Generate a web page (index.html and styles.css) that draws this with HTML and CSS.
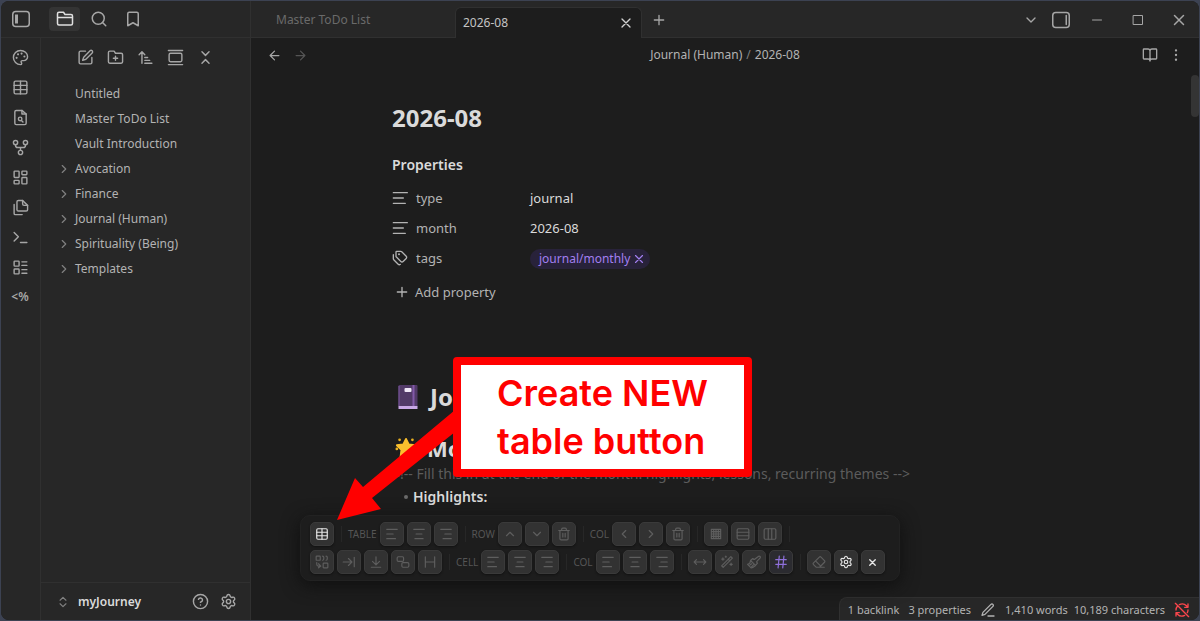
FILE: index.html
```html
<!DOCTYPE html>
<html lang="en">
<head>
<meta charset="utf-8">
<title>2026-08 - myJourney</title>
<link rel="stylesheet" href="styles.css">
</head>
<body>
<svg class="sprite" aria-hidden="true">
  <symbol id="palette" viewBox="0 0 24 24"><path d="M12 2a10 10 0 0 0 0 20c1 0 1.700-.8 1.700-1.700 0-.4-.2-.8-.4-1.100-.3-.3-.5-.7-.5-1.200a1.600 1.600 0 0 1 1.700-1.600h2A5.500 5.500 0 0 0 22 10.900C22 6 17.500 2 12 2z"/><path d="M13.500 6.500h.01M17.500 10.500h.01M8.500 7.500h.01M6.500 12.500h.01" stroke-width="3"/></symbol>
  <symbol id="table" viewBox="0 0 24 24"><rect x="3" y="3" width="18" height="18" rx="2"/><path d="M12 3v18M3 9h18M3 15h18"/></symbol>
  <symbol id="file-search" viewBox="0 0 24 24"><path d="M14 2H6a2 2 0 0 0-2 2v16a2 2 0 0 0 2 2h12a2 2 0 0 0 2-2V7z"/><path d="M14 2v5h6"/><circle cx="11.500" cy="14" r="2.500"/><path d="m13.300 16.200 2.200 2.300"/></symbol>
  <symbol id="fork" viewBox="0 0 24 24"><circle cx="12" cy="19" r="3"/><circle cx="5" cy="5" r="3"/><circle cx="19" cy="5" r="3"/><path d="M19 8v1a3 3 0 0 1-3 3H8a3 3 0 0 1-3-3V8M12 12v4"/></symbol>
  <symbol id="dashboard" viewBox="0 0 24 24"><rect x="3" y="3" width="7" height="9" rx="1"/><rect x="14" y="3" width="7" height="5" rx="1"/><rect x="14" y="12" width="7" height="9" rx="1"/><rect x="3" y="16" width="7" height="5" rx="1"/></symbol>
  <symbol id="files" viewBox="0 0 24 24"><path d="M15 2H9a2 2 0 0 0-2 2v11a2 2 0 0 0 2 2h11a2 2 0 0 0 2-2V9z"/><path d="M15 2v5a2 2 0 0 0 2 2h5M3 7.600v12.800A1.600 1.600 0 0 0 4.600 22h9.800"/></symbol>
  <symbol id="terminal" viewBox="0 0 24 24"><path d="m3 17 6-6-6-6M12 19h9"/></symbol>
  <symbol id="layout-list" viewBox="0 0 24 24"><rect x="3" y="3" width="7" height="7" rx="1"/><rect x="3" y="14" width="7" height="7" rx="1"/><path d="M14 4h7M14 9h7M14 15h7M14 20h7"/></symbol>
  <symbol id="folder" viewBox="0 0 24 24"><path d="M20 20a2 2 0 0 0 2-2V8a2 2 0 0 0-2-2h-8l-2-3H4a2 2 0 0 0-2 2v13a2 2 0 0 0 2 2zM2 10h20"/></symbol>
  <symbol id="search" viewBox="0 0 24 24"><circle cx="11" cy="11" r="8"/><path d="m21 21-4.300-4.300"/></symbol>
  <symbol id="bookmark" viewBox="0 0 24 24"><path d="m19 21-7-4-7 4V5a2 2 0 0 1 2-2h10a2 2 0 0 1 2 2z"/></symbol>
  <symbol id="edit" viewBox="0 0 24 24"><path d="M12 3H5a2 2 0 0 0-2 2v14a2 2 0 0 0 2 2h14a2 2 0 0 0 2-2v-7"/><path d="M18.400 2.600a2.100 2.100 0 0 1 3 3L12.500 14.500 8 16l1.500-4.500z"/></symbol>
  <symbol id="folder-plus" viewBox="0 0 24 24"><path d="M20 20a2 2 0 0 0 2-2V8a2 2 0 0 0-2-2h-8l-2-3H4a2 2 0 0 0-2 2v13a2 2 0 0 0 2 2zM12 10v6M9 13h6"/></symbol>
  <symbol id="sort" viewBox="0 0 24 24"><path d="m3 8 4-4 4 4M7 4v16M11 12h4M11 16h7M11 20h10"/></symbol>
  <symbol id="gallery" viewBox="0 0 24 24"><path d="M2 2h20M2 22h20"/><rect x="3" y="6" width="18" height="12" rx="2"/></symbol>
  <symbol id="collapse" viewBox="0 0 24 24"><path d="m7 20 5-5 5 5M7 4l5 5 5-5"/></symbol>
  <symbol id="right" viewBox="0 0 24 24"><path d="m9 18 6-6-6-6"/></symbol>
  <symbol id="left" viewBox="0 0 24 24"><path d="m15 18-6-6 6-6"/></symbol>
  <symbol id="down" viewBox="0 0 24 24"><path d="m6 9 6 6 6-6"/></symbol>
  <symbol id="up" viewBox="0 0 24 24"><path d="m6 15 6-6 6 6"/></symbol>
  <symbol id="updown" viewBox="0 0 24 24"><path d="m7 15 5 5 5-5M7 9l5-5 5 5"/></symbol>
  <symbol id="help" viewBox="0 0 24 24"><circle cx="12" cy="12" r="10"/><path d="M9.100 9a3 3 0 0 1 5.800 1c0 2-3 3-3 3M12 17h.01"/></symbol>
  <symbol id="gear" viewBox="0 0 24 24"><path d="M9.700 4.100a2.340 2.340 0 0 1 4.600 0 2.340 2.340 0 0 0 3.400 1.900 2.340 2.340 0 0 1 2.300 4 2.340 2.340 0 0 0 0 4 2.340 2.340 0 0 1-2.300 4 2.340 2.340 0 0 0-3.400 1.900 2.340 2.340 0 0 1-4.600 0A2.340 2.340 0 0 0 6.300 18 2.340 2.340 0 0 1 4 14a2.340 2.340 0 0 0 0-4 2.340 2.340 0 0 1 2.300-4 2.340 2.340 0 0 0 3.400-1.900z"/><circle cx="12" cy="12" r="3"/></symbol>
  <symbol id="arrow-left" viewBox="0 0 24 24"><path d="m12 19-7-7 7-7M19 12H5"/></symbol>
  <symbol id="arrow-right" viewBox="0 0 24 24"><path d="m12 5 7 7-7 7M5 12h14"/></symbol>
  <symbol id="x" viewBox="0 0 24 24"><path d="M18 6 6 18M6 6l12 12"/></symbol>
  <symbol id="plus" viewBox="0 0 24 24"><path d="M5 12h14M12 5v14"/></symbol>
  <symbol id="minus" viewBox="0 0 24 24"><path d="M3 12h18"/></symbol>
  <symbol id="square" viewBox="0 0 24 24"><path d="M3 3h18v18H3z"/></symbol>
  <symbol id="book" viewBox="0 0 24 24"><path d="M12 5v16M3 18a1 1 0 0 1-1-1V4a1 1 0 0 1 1-1h6a3 3 0 0 1 3 3 3 3 0 0 1 3-3h6a1 1 0 0 1 1 1v13a1 1 0 0 1-1 1h-6a3 3 0 0 0-3 3 3 3 0 0 0-3-3z"/></symbol>
  <symbol id="dots" viewBox="0 0 24 24"><path d="M12 4h.01M12 12h.01M12 20h.01" stroke-width="4"/></symbol>
  <symbol id="text" viewBox="0 0 24 24"><path d="M2 4h21M2 12h15M2 20h18"/></symbol>
  <symbol id="tags" viewBox="0 0 24 24"><path d="M13.200 2H7a1 1 0 0 0-1 1v6.200a2 2 0 0 0 .6 1.400l6.700 6.700a2.400 2.400 0 0 0 3.400 0l4.600-4.600a2.400 2.400 0 0 0 0-3.400l-6.700-6.700a2 2 0 0 0-1.400-.6zM2 7v6.200a2 2 0 0 0 .6 1.400l6.700 6.700a2.400 2.400 0 0 0 3.200.2"/><path d="M10.500 6.500h.01" stroke-width="3"/></symbol>
  <symbol id="align-left" viewBox="0 0 24 24"><path d="M3 4h18M3 12h11M3 20h15"/></symbol>
  <symbol id="align-center" viewBox="0 0 24 24"><path d="M3 4h18M7 12h10M5 20h14"/></symbol>
  <symbol id="align-right" viewBox="0 0 24 24"><path d="M3 4h18M10 12h11M7 20h14"/></symbol>
  <symbol id="trash" viewBox="0 0 24 24"><path d="M3 6h18M19 6v14a2 2 0 0 1-2 2H7a2 2 0 0 1-2-2V6M8 6V4a2 2 0 0 1 2-2h4a2 2 0 0 1 2 2v2M10 11v6M14 11v6"/></symbol>
  <symbol id="grid" viewBox="0 0 24 24"><path d="M4 4h16v16H4zM4 8h16M4 12h16M4 16h16M8 4v16M12 4v16M16 4v16"/></symbol>
  <symbol id="rows" viewBox="0 0 24 24"><rect x="2" y="3" width="20" height="18" rx="2"/><path d="M2 9h20M2 15h20"/></symbol>
  <symbol id="columns" viewBox="0 0 24 24"><rect x="2" y="3" width="20" height="18" rx="2"/><path d="M9 3v18M15 3v18"/></symbol>
  <symbol id="replace" viewBox="0 0 24 24"><rect x="2" y="2" width="7" height="7" rx="1"/><rect x="14" y="14" width="8" height="8" rx="1"/><path d="M13 2q2 0 2 2v3q0 2-2 2M19 2q2 0 2 2v3q0 2-2 2M3 13v3q0 3 3 3h3M6 15l4 4-4 3"/></symbol>
  <symbol id="tab" viewBox="0 0 24 24"><path d="M2 12h15M11 6l6 6-6 6M21 4v16"/></symbol>
  <symbol id="to-bottom" viewBox="0 0 24 24"><path d="M12 3v14M6 11l6 6 6-6M4 21h16"/></symbol>
  <symbol id="group" viewBox="0 0 24 24"><rect x="2" y="3" width="11" height="8" rx="2"/><rect x="10" y="13" width="12" height="8" rx="2"/></symbol>
  <symbol id="heading" viewBox="0 0 24 24"><path d="M4 3v18M20 3v18M4 12h16"/></symbol>
  <symbol id="width" viewBox="0 0 24 24"><path d="m6 8-4 4 4 4M18 8l4 4-4 4M2 12h20"/></symbol>
  <symbol id="wand" viewBox="0 0 24 24"><path d="m18.600 2.800 2.600 2.600L5.400 21.200l-2.600-2.600zM14 7l3 3M5 5v4M3 7h4M19 14v4M17 16h4M10 2v2M9 3h2"/></symbol>
  <symbol id="brush" viewBox="0 0 24 24"><path d="m14.600 17.900-8.500-8.500M19.400 2.600a2 2 0 0 1 2.900 2.900l-5 5a2 2 0 0 0 0 2.800l.7.700-3.400 3.900C12 20 9 22 7 22l-6-6c4-1 5-3 5.100-6.600L10 6l.9.900a2 2 0 0 0 2.800 0zM5 17l3-2M8 20l3-3"/></symbol>
  <symbol id="hash" viewBox="0 0 24 24"><path d="M3 8h18M3 16h18M9 2 7 22M17 2l-2 20"/></symbol>
  <symbol id="eraser" viewBox="0 0 24 24"><path d="M21 21H8a2 2 0 0 1-1.400-.6l-4-4a2 2 0 0 1 0-2.800l10-10a2 2 0 0 1 2.800 0l6 6a2 2 0 0 1 0 2.800L13 21M6 10l9 9"/></symbol>
  <symbol id="pen" viewBox="0 0 24 24"><path d="M12 21h9M16.400 3.600a2.100 2.100 0 0 1 3 3L7.400 18.600 3 20l1.400-4.400z"/></symbol>
  <symbol id="sync-off" viewBox="0 0 24 24"><path d="M21 8 18.700 5.700A9 9 0 0 0 8 4M21 3v5h-5M3 12a9 9 0 0 1 2.300-6M3 16l2.300 2.300A9 9 0 0 0 16 20M8 16H3v5M21 12a9 9 0 0 1-1 4M2 2l20 20"/></symbol>
  <symbol id="side-left" viewBox="0 0 24 24"><rect x="1" y="2" width="22" height="20" rx="4"/><path d="M6 6v12" stroke-width="4" stroke-linecap="butt"/></symbol>
  <symbol id="side-right" viewBox="0 0 24 24"><rect x="1" y="2" width="22" height="20" rx="4"/><path d="M19 6v12"/></symbol>
</svg>

<div class="window">
  <aside class="sidebar">
    <header class="side-head">
      <button class="ib toggle" aria-label="Toggle left sidebar"><svg class="i18"><use href="#side-left"/></svg></button>
      <button class="ib pane on" aria-label="Files"><svg class="i18"><use href="#folder"/></svg></button>
      <button class="ib pane" aria-label="Search"><svg class="i18"><use href="#search"/></svg></button>
      <button class="ib pane" aria-label="Bookmarks"><svg class="i18"><use href="#bookmark"/></svg></button>
    </header>
    <div class="side-body">
      <nav class="rail" aria-label="Ribbon">
        <button class="ib" aria-label="Style"><svg><use href="#palette"/></svg></button>
        <button class="ib" aria-label="Table"><svg><use href="#table"/></svg></button>
        <button class="ib" aria-label="Find file"><svg><use href="#file-search"/></svg></button>
        <button class="ib" aria-label="Graph"><svg><use href="#fork"/></svg></button>
        <button class="ib" aria-label="Canvas"><svg><use href="#dashboard"/></svg></button>
        <button class="ib" aria-label="Copies"><svg><use href="#files"/></svg></button>
        <button class="ib" aria-label="Commands"><svg><use href="#terminal"/></svg></button>
        <button class="ib" aria-label="Bases"><svg><use href="#layout-list"/></svg></button>
        <button class="ib templater">&lt;%</button>
      </nav>
      <div class="explorer">
        <div class="tools">
          <button class="ib" aria-label="New note"><svg><use href="#edit"/></svg></button>
          <button class="ib" aria-label="New folder"><svg><use href="#folder-plus"/></svg></button>
          <button class="ib" aria-label="Sort"><svg><use href="#sort"/></svg></button>
          <button class="ib" aria-label="Reveal"><svg><use href="#gallery"/></svg></button>
          <button class="ib" aria-label="Collapse all"><svg><use href="#collapse"/></svg></button>
        </div>
        <ul class="tree">
          <li><a href="#">Untitled</a></li>
          <li><a href="#">Master ToDo List</a></li>
          <li><a href="#">Vault Introduction</a></li>
          <li><svg><use href="#right"/></svg><a href="#">Avocation</a></li>
          <li><svg><use href="#right"/></svg><a href="#">Finance</a></li>
          <li><svg><use href="#right"/></svg><a href="#">Journal (Human)</a></li>
          <li><svg><use href="#right"/></svg><a href="#">Spirituality (Being)</a></li>
          <li><svg><use href="#right"/></svg><a href="#">Templates</a></li>
        </ul>
        <footer class="vault">
          <button class="vault-name"><svg><use href="#updown"/></svg>myJourney</button>
          <button class="ib" aria-label="Help"><svg><use href="#help"/></svg></button>
          <button class="ib" aria-label="Settings"><svg><use href="#gear"/></svg></button>
        </footer>
      </div>
    </div>
  </aside>

  <main class="main">
    <header class="tabbar">
      <button class="tab">Master ToDo List</button>
      <div class="tab active"><span>2026-08</span><button class="ib" aria-label="Close tab"><svg><use href="#x"/></svg></button></div>
      <button class="ib add-tab" aria-label="New tab"><svg><use href="#plus"/></svg></button>
      <div class="win-controls">
        <button class="ib" aria-label="Tab list"><svg class="i16"><use href="#down"/></svg></button>
        <button class="ib" aria-label="Toggle right sidebar"><svg class="i18"><use href="#side-right"/></svg></button>
        <button class="ib wc" aria-label="Minimize"><svg class="i12"><use href="#minus"/></svg></button>
        <button class="ib wc" aria-label="Maximize"><svg class="i12"><use href="#square"/></svg></button>
        <button class="ib wc" aria-label="Close"><svg class="i18"><use href="#x"/></svg></button>
      </div>
    </header>
    <div class="viewbar">
      <div class="hist">
        <button class="ib" aria-label="Back"><svg><use href="#arrow-left"/></svg></button>
        <button class="ib dim" aria-label="Forward"><svg><use href="#arrow-right"/></svg></button>
      </div>
      <div class="crumbs"><a href="#">Journal (Human)</a><span class="slash">/</span><span>2026-08</span></div>
      <div class="acts">
        <button class="ib" aria-label="Reading view"><svg class="i16"><use href="#book"/></svg></button>
        <button class="ib" aria-label="More options"><svg class="i14"><use href="#dots"/></svg></button>
      </div>
    </div>
    <article class="note">
      <h1 class="title">2026-08</h1>
      <h2 class="props-head">Properties</h2>
      <dl class="props">
        <dt><svg><use href="#text"/></svg>type</dt><dd>journal</dd>
        <dt><svg><use href="#text"/></svg>month</dt><dd>2026-08</dd>
        <dt><svg><use href="#tags"/></svg>tags</dt>
        <dd><span class="pill">journal/monthly<button class="ib" aria-label="Remove tag"><svg><use href="#x"/></svg></button></span></dd>
      </dl>
      <button class="add-prop"><svg><use href="#plus"/></svg>Add property</button>
      <h2 class="h-journal">
        <svg class="emoji" viewBox="0 0 24 26"><rect x="2" y="1" width="19" height="22" rx="1" fill="#523a68"/><path d="M16 1h2v22h-2z" fill="#8259a8"/><path d="M2 22h19v3H2z" fill="#c9a8e6"/><path d="M2 2h1v20H2z" fill="#7d58a0"/><rect x="8" y="4" width="7" height="4" rx="1" fill="#f0e8f8"/></svg>Jo</h2>
      <h3 class="h-month">
        <svg class="emoji star" viewBox="0 0 24 24"><path d="m12 2 3 6 7 1-5 5 1 8-6-4-6 4 1-8-5-5 7-1z" fill="#fbc02d" stroke="#fbc02d" stroke-linejoin="round"/><path d="M5 3h.01M19 3h.01M2 13h.01M22 14h.01" stroke="#e8b020" stroke-width="3" stroke-linecap="round"/></svg>Mo</h3>
      <p class="remark">&lt;!-- Fill this in at the end of the month: highlights, lessons, recurring themes --&gt;</p>
      <ul class="points"><li>Highlights:</li></ul>
    </article>
    <div class="scroll-thumb"></div>

    <div class="callout">
      <svg class="arrow" viewBox="0 0 140 130"><path d="M0 122 18 80l8 9L118 12v22L35 100l9 11z" fill="#f00"/></svg>
      <p>Create NEW<br>table button</p>
    </div>

    <div class="toolbar" role="toolbar" aria-label="Table tools">
      <div class="trow">
        <button class="tb lit" aria-label="Create table"><svg><use href="#table"/></svg></button><i></i>
        <span>TABLE</span>
        <button class="tb" aria-label="Table left"><svg><use href="#align-left"/></svg></button>
        <button class="tb" aria-label="Table center"><svg><use href="#align-center"/></svg></button>
        <button class="tb" aria-label="Table right"><svg><use href="#align-right"/></svg></button><i></i>
        <span>ROW</span>
        <button class="tb" aria-label="Row up"><svg><use href="#up"/></svg></button>
        <button class="tb" aria-label="Row down"><svg><use href="#down"/></svg></button>
        <button class="tb" aria-label="Delete row"><svg><use href="#trash"/></svg></button><i></i>
        <span>COL</span>
        <button class="tb" aria-label="Column left"><svg><use href="#left"/></svg></button>
        <button class="tb" aria-label="Column right"><svg><use href="#right"/></svg></button>
        <button class="tb" aria-label="Delete column"><svg><use href="#trash"/></svg></button><i></i>
        <button class="tb" aria-label="Grid"><svg><use href="#grid"/></svg></button>
        <button class="tb" aria-label="Rows"><svg><use href="#rows"/></svg></button>
        <button class="tb" aria-label="Columns"><svg><use href="#columns"/></svg></button><i></i>
      </div>
      <div class="trow">
        <button class="tb" aria-label="Transpose"><svg><use href="#replace"/></svg></button>
        <button class="tb" aria-label="Fill right"><svg><use href="#tab"/></svg></button>
        <button class="tb" aria-label="Fill down"><svg><use href="#to-bottom"/></svg></button>
        <button class="tb" aria-label="Merge"><svg><use href="#group"/></svg></button>
        <button class="tb" aria-label="Header"><svg><use href="#heading"/></svg></button><i></i>
        <span>CELL</span>
        <button class="tb" aria-label="Cell left"><svg><use href="#align-left"/></svg></button>
        <button class="tb" aria-label="Cell center"><svg><use href="#align-center"/></svg></button>
        <button class="tb" aria-label="Cell right"><svg><use href="#align-right"/></svg></button><i></i>
        <span>COL</span>
        <button class="tb" aria-label="Align column left"><svg><use href="#align-left"/></svg></button>
        <button class="tb" aria-label="Align column center"><svg><use href="#align-center"/></svg></button>
        <button class="tb" aria-label="Align column right"><svg><use href="#align-right"/></svg></button><i></i>
        <button class="tb" aria-label="Width"><svg><use href="#width"/></svg></button>
        <button class="tb" aria-label="Format"><svg><use href="#wand"/></svg></button>
        <button class="tb" aria-label="Paint"><svg><use href="#brush"/></svg></button>
        <button class="tb violet" aria-label="Numbering"><svg><use href="#hash"/></svg></button><i></i>
        <button class="tb" aria-label="Erase"><svg><use href="#eraser"/></svg></button>
        <button class="tb lit" aria-label="Toolbar settings"><svg><use href="#gear"/></svg></button>
        <button class="tb lit small" aria-label="Close toolbar"><svg><use href="#x"/></svg></button>
      </div>
    </div>

    <footer class="status">
      <span>1 backlink</span><span>3 properties</span>
      <svg class="i16"><use href="#pen"/></svg>
      <span>1,410 words</span><span class="tight">10,189 characters</span>
      <svg class="i16 red"><use href="#sync-off"/></svg>
    </footer>
  </main>
</div>
</body>
</html>
```

FILE: styles.css
```css
* { box-sizing: border-box; }
html, body { height: 100%; }
body {
  margin: 0;
  padding: 1px;
  background: #3c4252;
  color: #b3b3b3;
  font: 12px/20px "Noto Sans", "Open Sans", sans-serif;
  overflow: hidden;
}
h1, h2, h3, p, ul, dl, dd { margin: 0; padding: 0; }
ul { list-style: none; }
a { color: inherit; text-decoration: none; }
button { margin: 0; padding: 0; border: 0; background: none; color: inherit; font: inherit; }
.sprite { position: absolute; width: 0; height: 0; }
svg {
  display: block;
  flex: none;
  width: 17px;
  height: 17px;
  fill: none;
  stroke: currentColor;
  stroke-width: 2;
  stroke-linecap: round;
  stroke-linejoin: round;
}
svg.i18 { width: 18px; height: 18px; }
svg.i16 { width: 16px; height: 16px; }
svg.i14 { width: 14px; height: 14px; }
svg.i12 { width: 12px; height: 12px; }
.ib { display: flex; align-items: center; justify-content: center; color: #a6a6a6; }

.window {
  display: flex;
  height: 100%;
  border-radius: 8px;
  overflow: hidden;
  background: #1d1d1d;
}

/* Left sidebar */
.sidebar {
  display: flex;
  flex-direction: column;
  flex: none;
  width: 250px;
  background: #272727;
  border-right: 1px solid #303030;
}
.side-head {
  display: flex;
  align-items: center;
  flex: none;
  height: 37px;
  padding-left: 11px;
  border-bottom: 1px solid #303030;
}
.toggle { margin-right: 19px; }
.pane { width: 31px; height: 24px; margin-right: 3px; border-radius: 4px; }
.pane.on { background: #343434; color: #e0e0e0; }
.side-body { display: flex; flex: 1; min-height: 0; }
.rail { width: 40px; padding-top: 4px; border-right: 1px solid #303030; }
.rail .ib { width: 38px; height: 30px; }
.templater { font-size: 12px; font-weight: 600; }
.explorer { display: flex; flex-direction: column; flex: 1; }
.tools { display: flex; height: 38px; padding-left: 29px; }
.tools .ib { width: 30px; height: 38px; }
.tree { flex: 1; padding-top: 5px; }
.tree li { display: flex; align-items: center; height: 25px; padding-left: 34px; }
.tree li svg { width: 14px; height: 14px; margin: 0 4px 0 -18px; color: #808080; }
.vault {
  display: flex;
  align-items: center;
  height: 38px;
  padding: 0 8px 0 15px;
  border-top: 1px solid #303030;
}
.vault-name { display: flex; align-items: center; gap: 8px; margin-right: auto; color: #dadada; font-weight: 600; }
.vault-name svg { width: 14px; height: 14px; color: #808080; }
.vault .ib { width: 28px; height: 28px; }

/* Tabs and window buttons */
.main { position: relative; display: flex; flex-direction: column; flex: 1; min-width: 0; }
.tabbar {
  display: flex;
  align-items: center;
  flex: none;
  height: 37px;
  padding: 2px 0 0 17px;
  background: #272727;
  border-bottom: 1px solid #303030;
}
.tab {
  display: flex;
  align-items: center;
  width: 187px;
  padding: 0 8px;
  color: #6a6a6a;
}
.tab.active {
  justify-content: space-between;
  align-self: flex-end;
  height: 31px;
  margin-bottom: -1px;
  padding: 0 7px;
  border: 1px solid #303030;
  border-bottom: 0;
  border-radius: 6px 6px 0 0;
  background: #1d1d1d;
  color: #c4c4c4;
}
.tab.active .ib { color: #d0d0d0; }
.tab svg, .add-tab svg { width: 16px; height: 16px; }
.add-tab { margin-left: 9px; }
.win-controls { display: flex; align-items: center; margin-left: auto; }
.win-controls .ib { width: 30px; height: 30px; }
.win-controls .wc { width: 41px; }

.viewbar {
  display: grid;
  grid-template-columns: 1fr auto 1fr;
  align-items: center;
  flex: none;
  height: 34px;
  padding: 0 10px;
}
.hist, .acts { display: flex; }
.acts { justify-content: flex-end; }
.viewbar .ib { width: 26px; height: 26px; }
.hist svg { width: 15px; height: 15px; }
.dim { color: #555; }
.slash { margin: 0 4px; color: #808080; }

/* Note */
.note { width: 100%; max-width: 666px; margin: 0 auto; padding-top: 31px; color: #dadada; }
.title { font-size: 24px; line-height: 30px; }
.props-head { margin-top: 22px; font-size: 14px; line-height: 20px; font-weight: 600; }
.props { display: grid; grid-template-columns: 138px 1fr; grid-auto-rows: 30px; align-items: center; margin-top: 8px; font-size: 13px; }
.props dt { display: flex; align-items: center; gap: 8px; color: #b3b3b3; }
.props dt svg { width: 16px; height: 16px; }
.pill {
  display: inline-flex;
  align-items: center;
  gap: 2px;
  height: 20px;
  padding: 0 4px 0 9px;
  border-radius: 10px;
  background: #28223a;
  color: #a27ff0;
  font-size: 12px;
}
.pill .ib { color: inherit; }
.pill svg { width: 14px; height: 14px; }
.add-prop { display: flex; align-items: center; gap: 5px; height: 30px; margin-top: 4px; padding-left: 2px; color: #b3b3b3; font-size: 13px; }
.add-prop svg { width: 16px; height: 16px; }
.h-journal { display: flex; align-items: center; gap: 9px; margin-top: 72px; padding-left: 4px; font-size: 24px; line-height: 36px; }
.h-month { display: flex; align-items: center; gap: 10px; margin-top: 19px; padding-left: 3px; font-size: 22px; line-height: 28px; }
.emoji { width: 25px; height: 26px; stroke: none; }
.emoji.star { width: 22px; height: 22px; }
.remark { color: #5c5c5c; font-size: 14px; line-height: 23px; white-space: nowrap; }
.points li { display: flex; align-items: center; gap: 5px; padding-left: 12px; font-size: 14px; line-height: 23px; font-weight: 600; }
.points li::before { content: ""; width: 4px; height: 4px; border-radius: 50%; background: #6a6a6a; }
.scroll-thumb { position: absolute; top: 74px; right: 0; width: 8px; height: 42px; border-radius: 4px; background: #343434; }

/* Annotation over the note */
.callout {
  position: absolute;
  top: 356px;
  left: 202px;
  z-index: 3;
  width: 299px;
  padding: 4px 0 4px 36px;
  border: 8px solid #f00;
  border-radius: 4px;
  background: #fff;
  color: #f00;
  font: 600 36px/48px Inter, "Liberation Sans", sans-serif;
}
.callout p { white-space: nowrap; }
.arrow { position: absolute; top: 33px; left: -124px; width: 140px; height: 130px; stroke: none; }

/* Floating table toolbar */
.toolbar {
  position: absolute;
  top: 514px;
  left: 49px;
  z-index: 2;
  display: flex;
  flex-direction: column;
  gap: 4px;
  width: 600px;
  padding: 6px 9px;
  border: 1px solid #222;
  border-radius: 10px;
  background: #1d1d1d;
  box-shadow: 0 4px 18px #0f0f0f;
}
.trow { display: flex; align-items: center; gap: 3px; }
.trow i { width: 1px; height: 16px; margin: 0 3px 0 4px; background: #272727; }
.trow span { color: #555; font-size: 10px; line-height: 16px; }
.tb {
  display: flex;
  align-items: center;
  justify-content: center;
  flex: none;
  width: 24px;
  height: 24px;
  border: 1px solid #3a3a3a;
  border-radius: 5px;
  background: #323232;
  box-shadow: 0 1px 2px #121212;
  color: #5e5e5e;
}
.tb svg { width: 14px; height: 14px; }
.tb.lit { color: #e6e6e6; }
.tb.small svg { width: 11px; height: 11px; stroke-width: 3; }
.tb.violet { background: #2b2b30; color: #8f70dc; }

/* Status bar */
.status {
  position: absolute;
  right: 0;
  bottom: 0;
  display: flex;
  align-items: center;
  gap: 9px;
  height: 23px;
  padding: 2px 9px 0 8px;
  border: 1px solid #303030;
  border-width: 1px 0 0 1px;
  border-radius: 8px 0 0 0;
  background: #272727;
  font-size: 11px;
}
.status .tight { margin-left: -3px; }
.red { color: #fb464c; }
```
